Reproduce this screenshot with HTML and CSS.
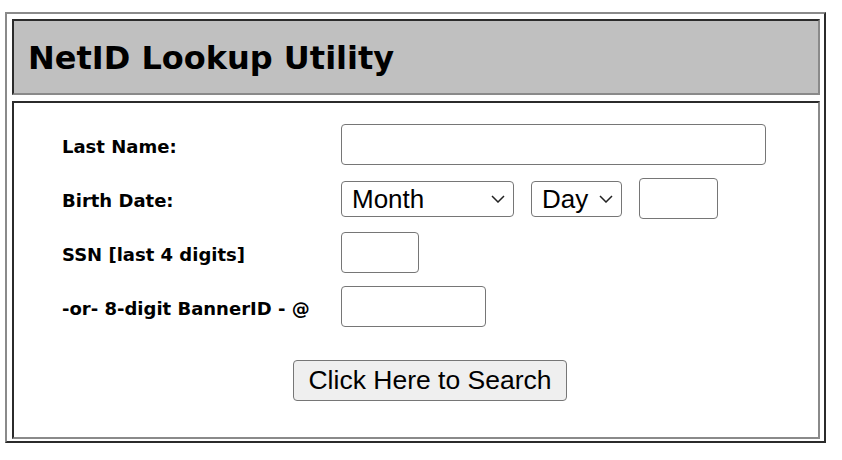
FILE: index.html
```html
<!DOCTYPE html>
<html>
<head>
<meta charset="utf-8">
<title>NetID Lookup Utility</title>
<link rel="stylesheet" href="styles.css">
</head>
<body>
<div class="frame">
  <div class="cell head"><h1 class="title">NetID Lookup Utility</h1></div>
  <div class="cell main">
    <form class="form">
      <div class="grid">
        <label class="lbl">Last Name:</label>
        <div class="ctl"><input class="inp w-last" type="text"></div>

        <label class="lbl">Birth Date:</label>
        <div class="ctl">
          <span class="sel-wrap w-month">
            <select class="sel"><option>Month</option></select>
            <svg class="chev" viewBox="0 0 14 8" width="14" height="8"><path d="M1 1 L7 7 L13 1" fill="none" stroke="#222" stroke-width="1.5"/></svg>
          </span>
          <span class="sel-wrap w-day">
            <select class="sel"><option>Day</option></select>
            <svg class="chev" viewBox="0 0 14 8" width="14" height="8"><path d="M1 1 L7 7 L13 1" fill="none" stroke="#222" stroke-width="1.5"/></svg>
          </span>
          <input class="inp w-year" type="text">
        </div>

        <label class="lbl">SSN [last 4 digits]</label>
        <div class="ctl"><input class="inp w-ssn" type="text"></div>

        <label class="lbl">-or- 8-digit BannerID - @</label>
        <div class="ctl"><input class="inp w-banner" type="text"></div>
      </div>
      <div class="actions"><button class="btn" type="button">Click Here to Search</button></div>
    </form>
  </div>
</div>
</body>
</html>
```

FILE: styles.css
```css
html, body {
  margin: 0;
  background: #ffffff;
}
body {
  padding: 12px 0 0 5px;
  font-family: "DejaVu Sans", Verdana, sans-serif;
  color: #000;
}
.frame {
  box-sizing: border-box;
  width: 821px;
  border: 2px solid;
  border-color: #8a8a8a #2b2b2b #2b2b2b #8a8a8a;
  padding: 5px 4px 2px 5px;
  display: flex;
  flex-direction: column;
  gap: 6px;
}
.cell {
  border: 2px solid;
  border-color: #2b2b2b #8a8a8a #8a8a8a #2b2b2b;
}
.head {
  background: #c0c0c0;
  height: 76px;
  box-sizing: border-box;
  display: flex;
  align-items: center;
  padding-left: 14px;
}
.title {
  margin: 0;
  padding-top: 2px;
  font-size: 32px;
  font-weight: bold;
}
.main {
  height: 338px;
  box-sizing: border-box;
  padding: 21px 0 0 48px;
  background: #fff;
}
.form {
  width: 736px;
  margin: 0;
}
.grid {
  display: grid;
  grid-template-columns: 279px 1fr;
  row-gap: 13px;
  align-items: center;
}
.lbl {
  font-size: 18px;
  font-weight: bold;
  padding-top: 3px;
}
.ctl {
  display: flex;
  align-items: center;
  gap: 17px;
}
.inp {
  box-sizing: border-box;
  height: 41px;
  border: 1px solid #767676;
  border-radius: 4px;
  background: #fff;
  padding: 0 6px;
  font-family: "Liberation Sans", Arial, sans-serif;
  font-size: 24px;
  margin: 0;
}
.w-last { width: 425px; }
.w-year { width: 79px; }
.w-ssn { width: 78px; }
.w-banner { width: 145px; }
.sel-wrap {
  position: relative;
  display: inline-block;
  height: 36px;
}
.w-month { width: 173px; }
.w-day { width: 91px; }
.sel {
  appearance: none;
  -webkit-appearance: none;
  box-sizing: border-box;
  width: 100%;
  height: 36px;
  border: 1px solid #767676;
  border-radius: 4px;
  background: #fff;
  color: #000;
  padding: 0 0 0 10px;
  margin: 0;
  font-family: "Liberation Sans", Arial, sans-serif;
  font-size: 26px;
  line-height: 34px;
}
.chev {
  position: absolute;
  right: 9px;
  top: 14px;
  pointer-events: none;
}
.actions {
  display: flex;
  justify-content: center;
  margin-top: 33px;
}
.btn {
  box-sizing: border-box;
  width: 274px;
  height: 41px;
  border: 1px solid #767676;
  border-radius: 4px;
  background: #efefef;
  color: #000;
  font-family: "Liberation Sans", Arial, sans-serif;
  font-size: 26.5px;
  padding: 0;
}
```
